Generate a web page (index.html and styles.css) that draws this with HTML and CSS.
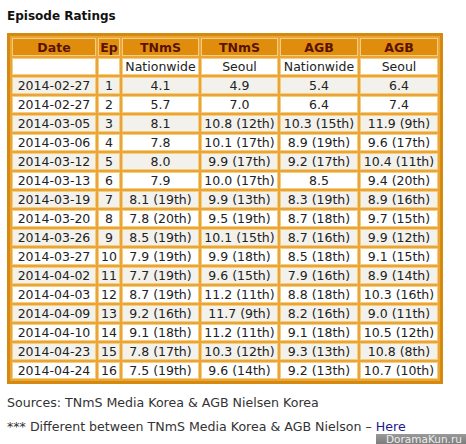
FILE: index.html
```html
<!DOCTYPE html>
<html lang="en">
<head>
    <meta charset="UTF-8">
    <title>Episode Ratings</title>
    <link rel="stylesheet" href="styles.css">
</head>
<body>
    <h4>Episode Ratings</h4>

    <table class="ratings">
        <colgroup>
            <col class="c-date"><col class="c-ep"><col class="c-val"><col class="c-val"><col class="c-val2"><col class="c-val2">
        </colgroup>
        <tr class="head">
            <th>Date</th><th>Ep</th><th>TNmS</th><th>TNmS</th><th>AGB</th><th>AGB</th>
        </tr>
        <tr>
            <td></td><td></td><td>Nationwide</td><td>Seoul</td><td>Nationwide</td><td>Seoul</td>
        </tr>
        <tr class="alt"><td>2014-02-27</td><td>1</td><td>4.1</td><td>4.9</td><td>5.4</td><td>6.4</td></tr>
        <tr><td>2014-02-27</td><td>2</td><td>5.7</td><td>7.0</td><td>6.4</td><td>7.4</td></tr>
        <tr class="alt"><td>2014-03-05</td><td>3</td><td>8.1</td><td>10.8 (12th)</td><td>10.3 (15th)</td><td>11.9 (9th)</td></tr>
        <tr><td>2014-03-06</td><td>4</td><td>7.8</td><td>10.1 (17th)</td><td>8.9 (19th)</td><td>9.6 (17th)</td></tr>
        <tr class="alt"><td>2014-03-12</td><td>5</td><td>8.0</td><td>9.9 (17th)</td><td>9.2 (17th)</td><td>10.4 (11th)</td></tr>
        <tr><td>2014-03-13</td><td>6</td><td>7.9</td><td>10.0 (17th)</td><td>8.5</td><td>9.4 (20th)</td></tr>
        <tr class="alt"><td>2014-03-19</td><td>7</td><td>8.1 (19th)</td><td>9.9 (13th)</td><td>8.3 (19th)</td><td>8.9 (16th)</td></tr>
        <tr><td>2014-03-20</td><td>8</td><td>7.8 (20th)</td><td>9.5 (19th)</td><td>8.7 (18th)</td><td>9.7 (15th)</td></tr>
        <tr class="alt"><td>2014-03-26</td><td>9</td><td>8.5 (19th)</td><td>10.1 (15th)</td><td>8.7 (16th)</td><td>9.9 (12th)</td></tr>
        <tr><td>2014-03-27</td><td>10</td><td>7.9 (19th)</td><td>9.9 (18th)</td><td>8.5 (18th)</td><td>9.1 (15th)</td></tr>
        <tr class="alt"><td>2014-04-02</td><td>11</td><td>7.7 (19th)</td><td>9.6 (15th)</td><td>7.9 (16th)</td><td>8.9 (14th)</td></tr>
        <tr><td>2014-04-03</td><td>12</td><td>8.7 (19th)</td><td>11.2 (11th)</td><td>8.8 (18th)</td><td>10.3 (16th)</td></tr>
        <tr class="alt"><td>2014-04-09</td><td>13</td><td>9.2 (16th)</td><td>11.7 (9th)</td><td>8.2 (16th)</td><td>9.0 (11th)</td></tr>
        <tr><td>2014-04-10</td><td>14</td><td>9.1 (18th)</td><td>11.2 (11th)</td><td>9.1 (18th)</td><td>10.5 (12th)</td></tr>
        <tr class="alt"><td>2014-04-23</td><td>15</td><td>7.8 (17th)</td><td>10.3 (12th)</td><td>9.3 (13th)</td><td>10.8 (8th)</td></tr>
        <tr><td>2014-04-24</td><td>16</td><td>7.5 (19th)</td><td>9.6 (14th)</td><td>9.2 (13th)</td><td>10.7 (10th)</td></tr>
    </table>

    <p class="note">Sources: TNmS Media Korea &amp; AGB Nielsen Korea</p>
    <p class="note">*** Different between TNmS Media Korea &amp; AGB Nielson &ndash; <a href="#">Here</a></p>

    <div class="watermark">DoramaKun.ru</div>
</body>
</html>
```

FILE: styles.css
```css
body {
    font-family: "DejaVu Sans", Verdana, sans-serif;
    margin: 0;
    padding: 7px;
    color: #222;
    background: #fff;
}
h4 {
    font-size: 12px;
    font-weight: bold;
    margin: 2px 0 10px 0;
    color: #111;
}
.ratings {
    table-layout: fixed;
    width: 436px;
    border: 3px solid #d6890f;
    border-spacing: 2px;
    background-color: #eaa53a;
    font-size: 12.5px;
}
.c-date { width: 84px; }
.c-ep { width: 22px; }
.c-val { width: 77px; }
.c-val2 { width: 78px; }
.ratings td,
.ratings th {
    border: 1px solid #f6cd7a;
    background-color: #fff;
    text-align: center;
    padding: 0;
    height: 15px;
    line-height: 15px;
    white-space: nowrap;
}
.ratings tr.alt td {
    background-color: #f3f1ec;
}
.ratings tr.head th {
    background-color: #e08d0e;
    color: #5a1300;
    height: 16px;
}
.note {
    font-size: 12.6px;
    line-height: 14px;
    color: #333;
    margin: 12px 0 0 0;
}
.note + .note {
    margin-top: 10px;
}
.note a {
    color: #1b1b8e;
    text-decoration: none;
}
.watermark {
    position: absolute;
    right: 0;
    bottom: 0;
    width: 80px;
    height: 10px;
    line-height: 10px;
    font-size: 10.5px;
    color: #eee;
    padding-left: 10px;
    background: linear-gradient(#9a9a9a, #7c7c7c);
}
```
